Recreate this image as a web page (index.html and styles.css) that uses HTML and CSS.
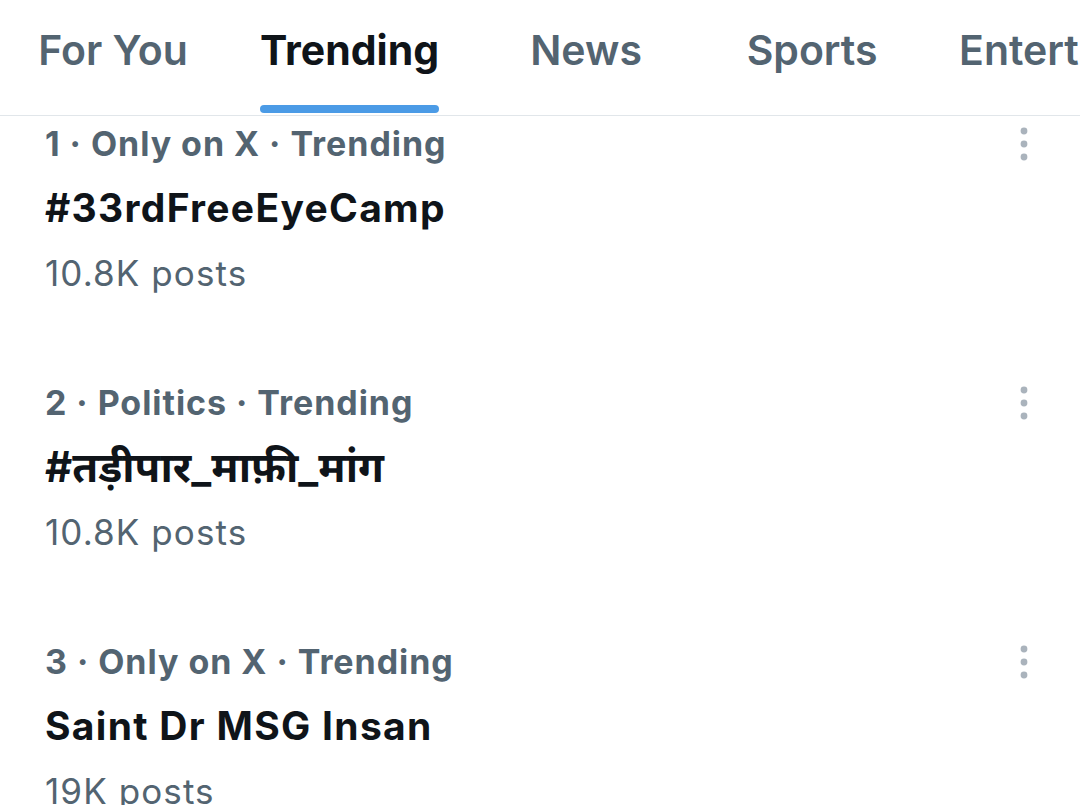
FILE: index.html
```html
<!DOCTYPE html>
<html lang="en">
<head>
<meta charset="utf-8">
<title>Explore – Trending</title>
<link rel="stylesheet" href="styles.css">
</head>
<body>
<div class="page">
  <nav class="tabs">
    <div class="tab"><span class="tab-label">For You</span></div>
    <div class="tab active"><span class="tab-label">Trending<span class="underline"></span></span></div>
    <div class="tab"><span class="tab-label">News</span></div>
    <div class="tab"><span class="tab-label">Sports</span></div>
    <div class="tab"><span class="tab-label">Entertainment</span></div>
  </nav>

  <ul class="trends">
    <li class="trend">
      <div class="trend-body">
        <div class="meta">1 · Only on X · Trending</div>
        <div class="title">#33rdFreeEyeCamp</div>
        <div class="count">10.8K posts</div>
      </div>
      <svg class="more" width="8" height="34" viewBox="0 0 8 34"><circle cx="4" cy="4" r="3.4"/><circle cx="4" cy="17" r="3.4"/><circle cx="4" cy="30" r="3.4"/></svg>
    </li>
    <li class="trend">
      <div class="trend-body">
        <div class="meta">2 · Politics · Trending</div>
        <div class="title hi">#तड़ीपार_माफ़ी_मांग</div>
        <div class="count">10.8K posts</div>
      </div>
      <svg class="more" width="8" height="34" viewBox="0 0 8 34"><circle cx="4" cy="4" r="3.4"/><circle cx="4" cy="17" r="3.4"/><circle cx="4" cy="30" r="3.4"/></svg>
    </li>
    <li class="trend">
      <div class="trend-body">
        <div class="meta">3 · Only on X · Trending</div>
        <div class="title">Saint Dr MSG Insan</div>
        <div class="count">19K posts</div>
      </div>
      <svg class="more" width="8" height="34" viewBox="0 0 8 34"><circle cx="4" cy="4" r="3.4"/><circle cx="4" cy="17" r="3.4"/><circle cx="4" cy="30" r="3.4"/></svg>
    </li>
  </ul>
</div>
</body>
</html>
```

FILE: styles.css
```css
html, body {
  margin: 0;
  padding: 0;
  background: #ffffff;
}

body {
  font-family: Inter, "Noto Sans", "DejaVu Sans", sans-serif;
  color: #0f1419;
}

.page {
  width: 1080px;
  height: 805px;
  overflow: hidden;
}

.tabs {
  display: flex;
  border-bottom: 1px solid #e1e6ea;
  overflow: hidden;
  white-space: nowrap;
}

.tab {
  flex: 0 0 auto;
  display: flex;
  justify-content: center;
  min-width: 226px;
  box-sizing: border-box;
  padding: 25px 34px 0;
  height: 115px;
  font-size: 41px;
  line-height: 50px;
  font-weight: 600;
  color: #536471;
}

.tab.active {
  color: #0f1419;
  font-weight: 700;
}

.tab-label {
  display: flex;
  flex-direction: column;
}

.underline {
  height: 8px;
  margin-top: 30px;
  border-radius: 4px;
  background: #4b9be6;
}

.trends {
  list-style: none;
  margin: 0;
  padding: 0;
}

.trend {
  display: flex;
  align-items: flex-start;
  padding: 6px 52px 80px 45px;
}

.trend-body {
  flex: 1;
}

.meta {
  font-size: 34px;
  line-height: 44px;
  font-weight: 700;
  letter-spacing: 0.95px;
  color: #536471;
}

.title {
  margin-top: 19px;
  font-size: 39px;
  line-height: 46px;
  font-weight: 700;
  letter-spacing: 1.3px;
  color: #0f1419;
}

.title.hi {
  font-size: 42px;
  letter-spacing: 0;
}

.count {
  margin-top: 20px;
  font-size: 35px;
  line-height: 44px;
  font-weight: 400;
  letter-spacing: 1.1px;
  color: #536471;
}

.more {
  margin-top: 5px;
  fill: #aab3bc;
}
```
